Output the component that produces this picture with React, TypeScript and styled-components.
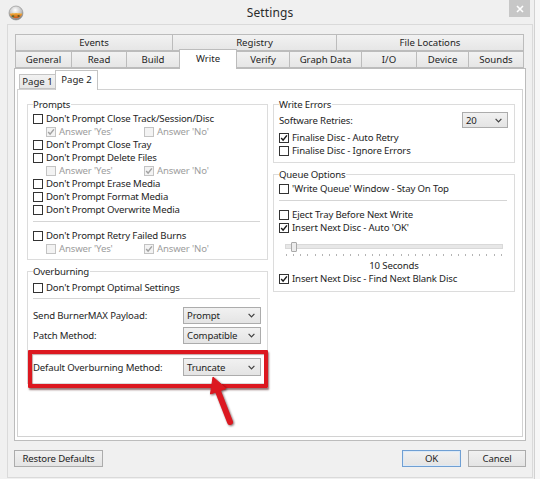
import React from 'react';
import styled, { createGlobalStyle } from 'styled-components';

const GlobalStyle = createGlobalStyle`
  * { box-sizing: border-box; }
  html, body { margin: 0; padding: 0; background: #f7f7f7; }
  body {
    font-family: "Noto Sans", "Open Sans", "DejaVu Sans", sans-serif;
    font-size: 9.6px;
    letter-spacing: -0.15px;
    color: #1e1e1e;
  }
`;

const Window = styled.div`
  width: 535px;
  height: 479px;
  background: #f0f0f0;
  border-right: 1px solid #d2d2d2;
  display: flex;
  flex-direction: column;
`;

const TitleBar = styled.div`
  height: 24px;
  flex: none;
  padding-left: 6px;
  display: grid;
  grid-template-columns: 1fr auto 1fr;
  align-items: center;
`;

const AppIcon = styled.svg`
  margin-left: 2px;
  margin-top: 2px;
  display: block;
`;

const Title = styled.div`
  font-size: 12px;
  color: #2a2a2a;
  letter-spacing: 0.1px;
`;

const CloseButton = styled.div`
  justify-self: end;
  align-self: start;
  margin-right: 4px;
  width: 21px;
  height: 17px;
  background: #c7c7c7;
  display: flex;
  align-items: center;
  justify-content: center;
`;

const Client = styled.div`
  flex: 1;
  margin: 0 1px 1px 7px;
  border: 1px solid #dadada;
  background: #f0f0f0;
  padding: 9px 6px 10px 6px;
  display: flex;
  flex-direction: column;
`;

const TabControl = styled.div`
  height: 407px;
  display: flex;
  flex-direction: column;
`;

const TabStrip = styled.div`
  height: 34px;
  padding-left: 1px;
  display: flex;
  flex-direction: column;
`;

const TabRow = styled.div`
  height: 17px;
  display: flex;
  align-items: stretch;
`;

const Tab = styled.div<{ $w: number; $active?: boolean }>`
  width: ${p => p.$w}px;
  flex: none;
  margin-right: -1px;
  border: 1px solid #bcbcbc;
  border-bottom: ${p => (p.$active ? 'none' : '1px solid #bcbcbc')};
  background: ${p => (p.$active ? '#ffffff' : 'linear-gradient(#f2f2f2, #e6e6e6)')};
  display: flex;
  align-items: center;
  justify-content: center;
  white-space: nowrap;
  letter-spacing: 0;
  position: relative;
  z-index: ${p => (p.$active ? 2 : 0)};
  ${p => (p.$active ? 'height: 20px; margin-top: -2px; align-self: flex-start; padding-bottom: 2px;' : '')}
`;

const OuterPage = styled.div`
  flex: 1;
  position: relative;
  z-index: 1;
  border: 1px solid #bcbcbc;
  background: #ffffff;
  padding: 1px 2px 3px 2px;
  display: flex;
  flex-direction: column;
`;

const SubStrip = styled.div`
  height: 19px;
  padding-left: 2px;
  display: flex;
  align-items: flex-end;
`;

const SubTab = styled.div<{ $w: number; $active?: boolean }>`
  width: ${p => p.$w}px;
  height: ${p => (p.$active ? 20 : 15)}px;
  margin-bottom: ${p => (p.$active ? -1 : 0)}px;
  margin-right: -1px;
  border: 1px solid #c4c4c4;
  border-bottom: ${p => (p.$active ? 'none' : '1px solid #c4c4c4')};
  background: ${p => (p.$active ? '#ffffff' : 'linear-gradient(#f2f2f2, #e6e6e6)')};
  display: flex;
  align-items: center;
  justify-content: center;
  padding-bottom: ${p => (p.$active ? 2 : 0)}px;
  position: relative;
  z-index: ${p => (p.$active ? 2 : 0)};
  white-space: nowrap;
  letter-spacing: 0;
`;

const InnerPage = styled.div`
  flex: 1;
  position: relative;
  z-index: 1;
  border: 1px solid #d2d2d2;
  background: #ffffff;
  padding: 8px 7px 0 9px;
  display: grid;
  grid-template-columns: 241px 242px;
  column-gap: 5px;
  align-items: start;
`;

const Column = styled.div`
  display: flex;
  flex-direction: column;
  gap: 5px;
`;

const Group = styled.fieldset<{ $pt?: number; $pb?: number }>`
  margin: 0;
  min-width: 0;
  border: 1px solid #dcdcdc;
  padding: ${p => p.$pt ?? 1}px 6px ${p => p.$pb ?? 4}px 5px;
  display: flex;
  flex-direction: column;
`;

const Legend = styled.legend`
  padding: 0 1px 0 0;
  line-height: 13px;
  height: 13px;
  color: #1e1e1e;
`;

const CheckRow = styled.div<{ $mt?: number; $disabled?: boolean }>`
  height: 13px;
  margin-top: ${p => p.$mt ?? 0}px;
  display: flex;
  align-items: center;
  gap: 3px;
  white-space: nowrap;
  color: ${p => (p.$disabled ? '#9d9d9d' : '#1e1e1e')};
`;

const SubRow = styled.div`
  height: 13px;
  padding-left: 13px;
  display: grid;
  grid-template-columns: 98px auto;
`;

const BoxShape = styled.span<{ $disabled?: boolean }>`
  width: 10px;
  height: 10px;
  flex: none;
  border: 1px solid ${p => (p.$disabled ? '#c3c3c3' : '#333333')};
  background: ${p => (p.$disabled ? '#f3f3f3' : '#ffffff')};
  display: flex;
  align-items: center;
  justify-content: center;
`;

const Separator = styled.div<{ $mt: number; $mb: number }>`
  height: 1px;
  background: #d5d5d5;
  margin: ${p => p.$mt}px 1px ${p => p.$mb}px 0;
`;

const FieldRow = styled.div<{ $h: number; $mt?: number }>`
  height: ${p => p.$h}px;
  margin-top: ${p => p.$mt ?? 0}px;
  display: flex;
  align-items: center;
  justify-content: space-between;
  white-space: nowrap;
  position: relative;
`;

const SelectBox = styled.div<{ $w: number; $h: number }>`
  width: ${p => p.$w}px;
  height: ${p => p.$h}px;
  border: 1px solid #acacac;
  background: linear-gradient(#f1f1f1, #e4e4e4);
  padding: 0 5px 0 3px;
  display: flex;
  align-items: center;
  justify-content: space-between;
  position: relative;
  z-index: 1;
`;

const Highlight = styled.div`
  position: absolute;
  left: -5px;
  right: -7px;
  top: -8px;
  bottom: -12px;
  border: 4px solid #dc1820;
  border-radius: 1px;
  box-shadow: 1px 2px 2px rgba(60, 0, 0, 0.55), inset 1px 1px 1px rgba(90, 0, 0, 0.35);
  pointer-events: none;
  z-index: 2;
`;

const Arrow = styled.svg`
  position: absolute;
  left: 167px;
  top: 14px;
  z-index: 3;
  overflow: visible;
  filter: drop-shadow(1px 1px 1px rgba(40, 0, 0, 0.6));
`;

const SliderArea = styled.div`
  margin: 8px 5px 0 6px;
  display: flex;
  flex-direction: column;
`;

const TrackWrap = styled.div`
  height: 9px;
  display: flex;
  align-items: center;
  position: relative;
`;

const Track = styled.div`
  flex: 1;
  height: 5px;
  border: 1px solid #d9d9d9;
  background: #e7e7e7;
`;

const Thumb = styled.div`
  position: absolute;
  left: 6px;
  top: 0;
  width: 6px;
  height: 10px;
  border: 1px solid #a9a9a9;
  background: #ececec;
  border-radius: 1px;
`;

const Ticks = styled.div`
  margin-top: 2px;
  height: 3px;
  padding: 0 1px;
  display: flex;
  justify-content: space-between;
`;

const Tick = styled.span`
  width: 1px;
  height: 2px;
  margin-top: 1px;
  background: #b4b4b4;
`;

const SliderLabel = styled.div`
  margin-top: 3px;
  height: 13px;
  line-height: 13px;
  text-align: center;
`;

const Footer = styled.div`
  margin-top: 9px;
  height: 17px;
  display: flex;
  justify-content: space-between;
`;

const ButtonGroup = styled.div`
  display: flex;
  gap: 7px;
`;

const Button = styled.div<{ $w: number; $default?: boolean }>`
  width: ${p => p.$w}px;
  height: 17px;
  border: 1px solid ${p => (p.$default ? '#6f9fd3' : '#acacac')};
  box-shadow: ${p => (p.$default ? 'inset 0 0 0 1px #dbe9f7' : 'none')};
  background: linear-gradient(#f1f1f1, #e4e4e4);
  display: flex;
  align-items: center;
  justify-content: center;
  white-space: nowrap;
`;

const Check: React.FC<{ checked?: boolean; disabled?: boolean }> = ({ checked, disabled }) => (
  <BoxShape $disabled={disabled}>
    {checked && (
      <svg width="8" height="8" viewBox="0 0 8 8">
        <path
          d="M1.2 4.1 L3.1 6.2 L6.9 1.4"
          fill="none"
          stroke={disabled ? '#a2a2a2' : '#1a1a1a'}
          strokeWidth="1.5"
        />
      </svg>
    )}
  </BoxShape>
);

const CheckItem: React.FC<{ label: string; checked?: boolean; disabled?: boolean; mt?: number }> = ({
  label,
  checked,
  disabled,
  mt,
}) => (
  <CheckRow $mt={mt} $disabled={disabled}>
    <Check checked={checked} disabled={disabled} />
    <span>{label}</span>
  </CheckRow>
);

const Answers: React.FC<{ yes?: boolean; no?: boolean }> = ({ yes, no }) => (
  <SubRow>
    <CheckItem label="Answer 'Yes'" checked={yes} disabled />
    <CheckItem label="Answer 'No'" checked={no} disabled />
  </SubRow>
);

const Chevron = () => (
  <svg width="7" height="5" viewBox="0 0 7 5">
    <polyline points="0.6,0.8 3.5,3.8 6.4,0.8" fill="none" stroke="#404040" strokeWidth="1.2" />
  </svg>
);

const Select: React.FC<{ value: string; w: number; h: number }> = ({ value, w, h }) => (
  <SelectBox $w={w} $h={h}>
    <span>{value}</span>
    <Chevron />
  </SelectBox>
);

const topTabs = [
  { label: 'Events', w: 158 },
  { label: 'Registry', w: 165 },
  { label: 'File Locations', w: 188 },
];

const bottomTabs = [
  { label: 'General', w: 57 },
  { label: 'Read', w: 56 },
  { label: 'Build', w: 54 },
  { label: 'Write', w: 58, active: true },
  { label: 'Verify', w: 54 },
  { label: 'Graph Data', w: 73 },
  { label: 'I/O', w: 56 },
  { label: 'Device', w: 53 },
  { label: 'Sounds', w: 56 },
];

export default function App() {
  const ticks = Array.from({ length: 31 }, (_, i) => i);
  return (
    <>
      <GlobalStyle />
      <Window>
        <TitleBar>
          <AppIcon width="16" height="16" viewBox="0 0 16 16">
            <defs>
              <radialGradient id="sph" cx="0.45" cy="0.3" r="0.7">
                <stop offset="0" stopColor="#ffffff" />
                <stop offset="0.6" stopColor="#c4c4c4" />
                <stop offset="1" stopColor="#7d7d7d" />
              </radialGradient>
              <linearGradient id="fl" x1="0" y1="0" x2="0" y2="1">
                <stop offset="0" stopColor="#f6b73c" />
                <stop offset="1" stopColor="#c8561a" />
              </linearGradient>
            </defs>
            <circle cx="8" cy="8" r="7" fill="url(#sph)" stroke="#8a8a8a" strokeWidth="0.6" />
            <path d="M1.6 9 C3 7.5 4 9.5 5 7.8 C6 9.6 7 7 8 8.6 C9 7 10 9.4 11 7.8 C12 9.5 13 7.6 14.4 9 A7 7 0 0 1 1.6 9 Z" fill="url(#fl)" />
            <ellipse cx="5" cy="11.3" rx="1.4" ry="1" fill="#5d6b2a" />
            <ellipse cx="10.6" cy="11" rx="1.2" ry="0.9" fill="#6b5a22" />
          </AppIcon>
          <Title>Settings</Title>
          <CloseButton>
            <svg width="8" height="8" viewBox="0 0 8 8">
              <path d="M1 1 L7 7 M7 1 L1 7" stroke="#ffffff" strokeWidth="1.6" />
            </svg>
          </CloseButton>
        </TitleBar>
        <Client>
          <TabControl>
            <TabStrip>
              <TabRow>
                {topTabs.map(t => (
                  <Tab key={t.label} $w={t.w}>
                    {t.label}
                  </Tab>
                ))}
              </TabRow>
              <TabRow>
                {bottomTabs.map(t => (
                  <Tab key={t.label} $w={t.w} $active={t.active}>
                    {t.label}
                  </Tab>
                ))}
              </TabRow>
            </TabStrip>
            <OuterPage>
              <SubStrip>
                <SubTab $w={37}>Page 1</SubTab>
                <SubTab $w={43} $active>
                  Page 2
                </SubTab>
              </SubStrip>
              <InnerPage>
                <Column>
                  <Group>
                    <Legend>Prompts</Legend>
                    <CheckItem label="Don't Prompt Close Track/Session/Disc" />
                    <Answers yes />
                    <CheckItem label="Don't Prompt Close Tray" />
                    <CheckItem label="Don't Prompt Delete Files" />
                    <Answers no />
                    <CheckItem label="Don't Prompt Erase Media" />
                    <CheckItem label="Don't Prompt Format Media" />
                    <CheckItem label="Don't Prompt Overwrite Media" />
                    <Separator $mt={5} $mb={7} />
                    <CheckItem label="Don't Prompt Retry Failed Burns" />
                    <Answers no />
                  </Group>
                  <Group $pt={3} $pb={7}>
                    <Legend>Overburning</Legend>
                    <CheckItem label="Don't Prompt Optimal Settings" />
                    <Separator $mt={4} $mb={8} />
                    <FieldRow $h={17}>
                      <span>Send BurnerMAX Payload:</span>
                      <Select value="Prompt" w={78} h={17} />
                    </FieldRow>
                    <FieldRow $h={17} $mt={3}>
                      <span>Patch Method:</span>
                      <Select value="Compatible" w={78} h={17} />
                    </FieldRow>
                    <FieldRow $h={18} $mt={14}>
                      <span>Default Overburning Method:</span>
                      <Select value="Truncate" w={78} h={18} />
                      <Highlight />
                      <Arrow width="40" height="58" viewBox="0 0 40 58">
                        <line x1="17.5" y1="18" x2="30" y2="50" stroke="#dc1820" strokeWidth="6" strokeLinecap="round" />
                        <polygon points="13,5 26,16.5 10.5,22" fill="#dc1820" stroke="#dc1820" strokeWidth="1" strokeLinejoin="round" />
                      </Arrow>
                    </FieldRow>
                  </Group>
                </Column>
                <Column>
                  <Group $pb={5}>
                    <Legend>Write Errors</Legend>
                    <FieldRow $h={16}>
                      <span>Software Retries:</span>
                      <Select value="20" w={46} h={16} />
                    </FieldRow>
                    <CheckItem label="Finalise Disc - Auto Retry" checked mt={3} />
                    <CheckItem label="Finalise Disc - Ignore Errors" />
                  </Group>
                  <Group $pb={6}>
                    <Legend>Queue Options</Legend>
                    <CheckItem label="'Write Queue' Window - Stay On Top" />
                    <Separator $mt={5} $mb={7} />
                    <CheckItem label="Eject Tray Before Next Write" />
                    <CheckItem label="Insert Next Disc - Auto 'OK'" checked />
                    <SliderArea>
                      <TrackWrap>
                        <Track />
                        <Thumb />
                      </TrackWrap>
                      <Ticks>
                        {ticks.map(i => (
                          <Tick key={i} />
                        ))}
                      </Ticks>
                      <SliderLabel>10 Seconds</SliderLabel>
                    </SliderArea>
                    <CheckItem label="Insert Next Disc - Find Next Blank Disc" checked />
                  </Group>
                </Column>
              </InnerPage>
            </OuterPage>
          </TabControl>
          <Footer>
            <Button $w={89}>Restore Defaults</Button>
            <ButtonGroup>
              <Button $w={59} $default>
                OK
              </Button>
              <Button $w={58}>Cancel</Button>
            </ButtonGroup>
          </Footer>
        </Client>
      </Window>
    </>
  );
}
